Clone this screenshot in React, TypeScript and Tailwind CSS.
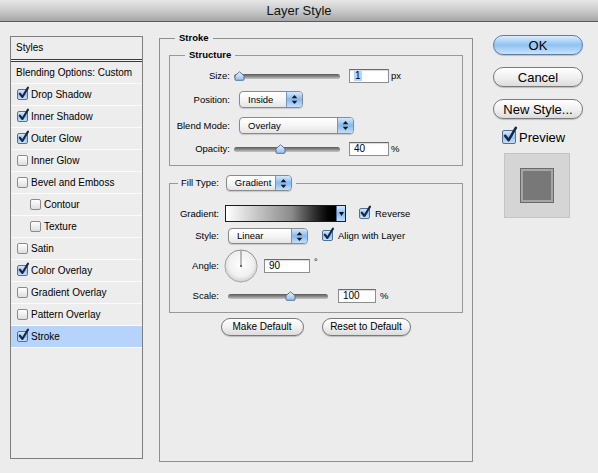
import React, { useId } from "react";

const Arrows = () => (
  <svg width="7" height="11" viewBox="0 0 7 11">
    <path d="M3.5 1 L6.3 4.3 H0.7Z" fill="#151515" />
    <path d="M3.5 10 L6.3 6.7 H0.7Z" fill="#151515" />
  </svg>
);

function Popup({ label, className }: { label: string; className: string }) {
  return (
    <div
      className={`flex shrink-0 overflow-hidden rounded-[4px] border border-[#8a8a8a] bg-linear-to-b from-white via-[#f6f6f6] to-[#e4e4e4] shadow-[0_1px_1px_rgba(0,0,0,0.15)] ${className}`}
    >
      <div className="flex flex-1 items-center pl-[8px] text-[9.5px] leading-none text-black">{label}</div>
      <div className="flex w-[16px] items-center justify-center border-l border-[#7396c2] bg-linear-to-b from-[#d6e8fb] via-[#86b9ee] to-[#c3def9]">
        <Arrows />
      </div>
    </div>
  );
}

function CheckBox({ checked, big }: { checked?: boolean; big?: boolean }) {
  const box = big ? "w-[14px] h-[14px]" : "w-[11px] h-[11px]";
  const tone = checked
    ? "border-[#4f7098] bg-linear-to-b from-[#d8e9fb] via-[#95c2ee] to-[#c6e0f9]"
    : "border-[#8b8b8b] bg-linear-to-b from-white to-[#dedede]";
  return (
    <span className={`relative inline-block shrink-0 rounded-[2px] border ${box} ${tone}`}>
      {checked &&
        (big ? (
          <svg className="absolute -top-[5px] left-[0px] overflow-visible" width="15" height="18" viewBox="0 0 15 18">
            <path d="M2.2 9.8 L5.6 14.2 L12.8 1.8" fill="none" stroke="#182746" strokeWidth="2.6" strokeLinecap="round" strokeLinejoin="round" />
          </svg>
        ) : (
          <svg className="absolute -top-[4px] left-[0px] overflow-visible" width="12" height="14" viewBox="0 0 12 14">
            <path d="M1.8 7.6 L4.4 11 L10 1.6" fill="none" stroke="#182746" strokeWidth="2.1" strokeLinecap="round" strokeLinejoin="round" />
          </svg>
        ))}
    </span>
  );
}

function Slider({ className, thumb }: { className: string; thumb: string }) {
  const id = useId();
  return (
    <div className={`relative h-[10px] shrink-0 ${className}`}>
      <div className="absolute left-0 right-0 top-[3px] h-[5px] rounded-full bg-linear-to-b from-[#5a5a5a] via-[#8c8c8c] to-[#c8c8c8]" />
      <svg className={`absolute top-0 ${thumb}`} width="11" height="10" viewBox="0 0 11 10">
        <defs>
          <linearGradient id={id} x1="0" y1="0" x2="0" y2="1">
            <stop offset="0" stopColor="#eef5fd" />
            <stop offset="1" stopColor="#93bde9" />
          </linearGradient>
        </defs>
        <path d="M1 4.6 L5.5 0.8 L10 4.6 V8.4 Q10 9.3 9.1 9.3 H1.9 Q1 9.3 1 8.4Z" fill={`url(#${id})`} stroke="#4a6a93" strokeWidth="0.9" />
      </svg>
    </div>
  );
}

function Field({ value, className, selected }: { value: string; className: string; selected?: boolean }) {
  return (
    <div
      className={`flex shrink-0 items-center border border-[#8e8e8e] border-t-[#6a6a6a] bg-white pl-[4px] text-[10px] leading-none text-black shadow-[inset_0_1px_1px_rgba(0,0,0,0.15)] ${className}`}
    >
      {selected ? <span className="bg-[#b5d5ff] px-[1px]">{value}</span> : value}
    </div>
  );
}

function Pill({ children, className, primary }: { children: React.ReactNode; className: string; primary?: boolean }) {
  const tone = primary
    ? "border-[#5b7fa8] bg-linear-to-b from-[#dcedfd] via-[#8fc2f2] to-[#c9e4fc]"
    : "border-[#7a7a7a] bg-linear-to-b from-white via-[#f1f1f1] to-[#dcdcdc]";
  return (
    <div
      className={`flex shrink-0 items-center justify-center rounded-full border leading-none text-black shadow-[0_1px_1px_rgba(0,0,0,0.2)] ${tone} ${className}`}
    >
      {children}
    </div>
  );
}

const Label = ({ children, className }: { children: React.ReactNode; className: string }) => (
  <div className={`shrink-0 text-right text-[9.5px] leading-none text-black ${className}`}>{children}</div>
);

const styleRows: { name: string; checked?: boolean; indent?: boolean; active?: boolean }[] = [
  { name: "Drop Shadow", checked: true },
  { name: "Inner Shadow", checked: true },
  { name: "Outer Glow", checked: true },
  { name: "Inner Glow" },
  { name: "Bevel and Emboss" },
  { name: "Contour", indent: true },
  { name: "Texture", indent: true },
  { name: "Satin" },
  { name: "Color Overlay", checked: true },
  { name: "Gradient Overlay" },
  { name: "Pattern Overlay" },
  { name: "Stroke", checked: true, active: true },
];

function Dial() {
  const id = useId();
  return (
    <svg width="34" height="34" viewBox="0 0 34 34" className="shrink-0">
      <defs>
        <radialGradient id={id} cx="0.5" cy="0.45" r="0.55">
          <stop offset="0" stopColor="#ffffff" />
          <stop offset="0.7" stopColor="#f0f0f0" />
          <stop offset="1" stopColor="#cfcfcf" />
        </radialGradient>
      </defs>
      <circle cx="17" cy="17" r="16" fill={`url(#${id})`} stroke="#8a8a8a" strokeWidth="1" />
      <circle cx="17" cy="17.6" r="15.6" fill="none" stroke="#ffffff" strokeOpacity="0.6" strokeWidth="0.6" />
      <line x1="17" y1="17" x2="17" y2="1.5" stroke="#7a7a7a" strokeWidth="1" />
      <rect x="16" y="16" width="2" height="2" fill="#6a6a6a" />
    </svg>
  );
}

export default function App() {
  return (
    <div className="flex h-[473px] w-[598px] flex-col overflow-hidden bg-[#ececec] font-['Liberation_Sans',Arial,sans-serif] text-black">
      {/* title bar */}
      <div className="flex h-[22px] shrink-0 items-center justify-center border-b border-[#5c5c5c] bg-linear-to-b from-[#e6e6e6] via-[#cbcbcb] to-[#a6a6a6] text-[13px] leading-none text-[#111]">
        Layer Style
      </div>

      <div className="flex pl-[10px]">
        {/* left list */}
        <div className="mt-[14px] h-[423px] w-[133px] shrink-0 border border-[#7e7e7e] bg-[#ededed]">
          <div className="flex h-[22px] items-center pl-[5px] text-[10px] leading-none">Styles</div>
          <div className="h-[3px] border-y border-[#3a3a3a] bg-[#f4f4f4]" />
          <div className="flex h-[22px] items-center border-b border-[#fbfbfb] pl-[5px] text-[10px] leading-none">
            Blending Options: Custom
          </div>
          {styleRows.map((r) => (
            <div
              key={r.name}
              className={`flex h-[22px] items-center border-b border-[#fbfbfb] text-[10px] leading-none ${
                r.indent ? "pl-[19px]" : "pl-[6px]"
              } ${r.active ? "bg-[#b6d4fb]" : ""}`}
            >
              <CheckBox checked={r.checked} />
              <span className="ml-[3px]">{r.name}</span>
            </div>
          ))}
        </div>

        {/* main group */}
        <fieldset className="ml-[16px] mt-[10px] h-[430px] w-[314px] shrink-0 border border-[#8f8f8f] px-[9px]">
          <legend className="ml-[6px] px-[4px] text-[9.5px] font-bold leading-[12px]">Stroke</legend>

          <fieldset className="mt-[5px] h-[117px] border border-[#989898]">
            <legend className="ml-[15px] px-[4px] text-[9.5px] font-bold leading-[12px]">Structure</legend>
            <div className="flex flex-col pt-[8px]">
              <div className="flex h-[14px] items-center">
                <Label className="w-[60px]">Size:</Label>
                <Slider className="ml-[4px] w-[106px]" thumb="left-[0px]" />
                <Field className="ml-[9px] h-[14px] w-[40px]" value="1" selected />
                <span className="ml-[2px] text-[9.5px] leading-none">px</span>
              </div>
              <div className="mt-[8px] flex h-[17px] items-center">
                <Label className="w-[60px]">Position:</Label>
                <Popup label="Inside" className="ml-[9px] h-[17px] w-[64px]" />
              </div>
              <div className="mt-[9px] flex h-[17px] items-center">
                <Label className="w-[60px]">Blend Mode:</Label>
                <Popup label="Overlay" className="ml-[9px] h-[17px] w-[115px]" />
              </div>
              <div className="mt-[8px] flex h-[14px] items-center">
                <Label className="w-[60px]">Opacity:</Label>
                <Slider className="ml-[4px] w-[106px]" thumb="left-[41px]" />
                <Field className="ml-[9px] h-[14px] w-[40px]" value="40" />
                <span className="ml-[2px] text-[9.5px] leading-none">%</span>
              </div>
            </div>
          </fieldset>

          <fieldset className="mt-[9px] h-[138px] border border-[#989898]">
            <legend className="ml-[8px] flex items-center pl-[3px] pr-[4px]">
              <span className="text-[9.5px] leading-none">Fill Type:</span>
              <Popup label="Gradient" className="ml-[7px] h-[16px] w-[66px]" />
            </legend>
            <div className="flex flex-col">
              <div className="mt-[14px] flex h-[17px] items-center">
                <Label className="w-[49px]">Gradient:</Label>
                <div className="ml-[6px] flex h-[17px] w-[121px] shrink-0 border border-[#1e1e1e]">
                  <div className="flex-1 bg-linear-to-r from-white via-[#8a8a8a] via-60% to-black" />
                  <div className="flex w-[9px] items-center justify-center border-l border-[#4a6d99] bg-linear-to-b from-[#d6e8fb] via-[#86b9ee] to-[#c3def9]">
                    <svg width="5" height="4" viewBox="0 0 5 4">
                      <path d="M0 0 H5 L2.5 4Z" fill="#111" />
                    </svg>
                  </div>
                </div>
                <span className="ml-[13px]">
                  <CheckBox checked />
                </span>
                <span className="ml-[5px] text-[9.5px] leading-none">Reverse</span>
              </div>
              <div className="mt-[6px] flex h-[16px] items-center">
                <Label className="w-[49px]">Style:</Label>
                <Popup label="Linear" className="ml-[9px] h-[16px] w-[80px]" />
                <span className="ml-[14px]">
                  <CheckBox checked />
                </span>
                <span className="ml-[5px] text-[9.5px] leading-none">Align with Layer</span>
              </div>
              <div className="mt-[5px] flex h-[34px] items-center">
                <Label className="w-[49px]">Angle:</Label>
                <div className="ml-[5px]">
                  <Dial />
                </div>
                <Field className="ml-[6px] h-[14px] w-[46px]" value="90" />
                <span className="ml-[4px] self-start pt-[9px] text-[9px] leading-none">°</span>
              </div>
              <div className="mt-[6px] flex h-[14px] items-center">
                <Label className="w-[49px]">Scale:</Label>
                <Slider className="ml-[9px] w-[100px]" thumb="left-[57px]" />
                <Field className="ml-[10px] h-[14px] w-[38px]" value="100" />
                <span className="ml-[4px] text-[9.5px] leading-none">%</span>
              </div>
            </div>
          </fieldset>

          <div className="mt-[5px] flex justify-center gap-[18px] pr-[1px]">
            <Pill className="h-[18px] w-[83px] text-[10px]">Make Default</Pill>
            <Pill className="h-[18px] w-[89px] text-[10px]">Reset to Default</Pill>
          </div>
        </fieldset>

        {/* right column */}
        <div className="ml-[20px] mt-[13px] flex w-[90px] shrink-0 flex-col">
          <Pill primary className="h-[20px] w-[90px] text-[13px]">OK</Pill>
          <Pill className="mt-[12px] h-[20px] w-[90px] text-[13px]">Cancel</Pill>
          <Pill className="mt-[12px] h-[20px] w-[90px] text-[13px]">New Style...</Pill>
          <div className="mt-[11px] flex h-[14px] items-center pl-[9px]">
            <CheckBox checked big />
            <span className="ml-[3px] text-[13px] leading-none">Preview</span>
          </div>
          <div className="ml-[11px] mt-[9px] flex h-[65px] w-[66px] items-center justify-center border border-[#c4c4c4] bg-[#d5d5d5]">
            <div className="h-[33px] w-[32px] border-2 border-[#a6a6a6] bg-[#787878] shadow-[0_0_0_1px_#6a6a6a]" />
          </div>
        </div>
      </div>
    </div>
  );
}
